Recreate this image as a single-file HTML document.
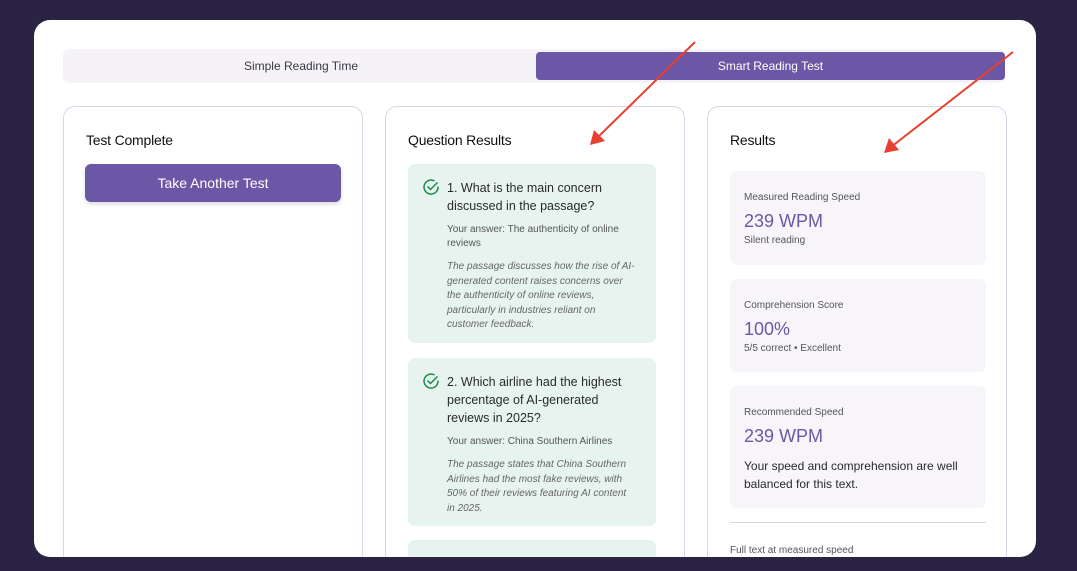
<!DOCTYPE html>
<html><head><style>
*{margin:0;padding:0;box-sizing:border-box}
body{width:1077px;height:571px;background:#2a2343;font-family:"Liberation Sans",sans-serif;position:relative;overflow:hidden;color:#1d1b24}
.panel{position:absolute;left:34px;top:20px;width:1002px;height:537px;background:#fff;border-radius:16px;overflow:hidden}
.abs{position:absolute}
.tabs{left:29px;top:29px;width:942px;height:34px;background:#f5f3f7;border-radius:6px}
.tab{position:absolute;top:3px;height:28px;font-size:12px;color:#3a3842;display:flex;align-items:center;justify-content:center}
.card{position:absolute;top:86px;width:300px;height:460px;border:1px solid #ddd3e6;border-radius:12px;overflow:hidden}
.h{position:absolute;left:22px;top:25px;font-size:14px;color:#111;letter-spacing:-0.2px}
.btn{position:absolute;left:21px;top:57px;width:256px;height:38px;background:#6b57a5;border-radius:6px;color:#fff;font-size:14px;display:flex;align-items:center;justify-content:center;box-shadow:0 2px 4px rgba(0,0,0,.15)}
.q{position:absolute;left:22px;width:248px;background:#e7f3ee;border-radius:7px;padding:15px 16px 0 39px}
.q svg{position:absolute;left:14px;top:14px}
.qt{font-size:12.5px;line-height:18px;color:#2a2a2e}
.ya{font-size:10px;line-height:14px;color:#555;margin-top:8px}
.ex{font-size:10px;line-height:14.5px;color:#666;font-style:italic;margin-top:9px;padding-right:4px}
.r{position:absolute;left:22px;width:256px;background:#f7f5fa;border-radius:7px;padding:21px 14px 0}
.rl{font-size:10px;color:#555}
.rv{font-size:18px;color:#6b57a5;margin-top:8px}
.rs{font-size:10px;color:#555;margin-top:3px}
</style></head><body>
<div class="panel">
 <div class="abs tabs">
  <div class="tab" style="left:3px;width:470px">Simple Reading Time</div>
  <div class="tab" style="left:473px;width:469px;background:#6b57a5;color:#fff;border-radius:4px">Smart Reading Test</div>
 </div>
 <div class="card" style="left:29px"><div class="h">Test Complete</div><div class="btn">Take Another Test</div></div>
 <div class="card" style="left:351px"><div class="h">Question Results</div>
  <div class="q" style="top:57px;height:179px">
   <svg width="18" height="18" viewBox="0 0 18 18"><path d="M16 8.5A7 7 0 1 1 12.5 3" fill="none" stroke="#1f8a4c" stroke-width="1.5"/><path d="M5.5 8.5l3 3 7-7" fill="none" stroke="#1f8a4c" stroke-width="1.5"/></svg>
   <div class="qt">1. What is the main concern discussed in the passage?</div>
   <div class="ya">Your answer: The authenticity of online reviews</div>
   <div class="ex">The passage discusses how the rise of AI-generated content raises concerns over the authenticity of online reviews, particularly in industries reliant on customer feedback.</div>
  </div>
  <div class="q" style="top:251px;height:168px">
   <svg width="18" height="18" viewBox="0 0 18 18"><path d="M16 8.5A7 7 0 1 1 12.5 3" fill="none" stroke="#1f8a4c" stroke-width="1.5"/><path d="M5.5 8.5l3 3 7-7" fill="none" stroke="#1f8a4c" stroke-width="1.5"/></svg>
   <div class="qt">2. Which airline had the highest percentage of AI-generated reviews in 2025?</div>
   <div class="ya">Your answer: China Southern Airlines</div>
   <div class="ex">The passage states that China Southern Airlines had the most fake reviews, with 50% of their reviews featuring AI content in 2025.</div>
  </div>
  <div class="q" style="top:433px;height:60px"></div>
 </div>
 <div class="card" style="left:673px"><div class="h">Results</div>
  <div class="r" style="top:64px;height:94px"><div class="rl">Measured Reading Speed</div><div class="rv">239 WPM</div><div class="rs">Silent reading</div></div>
  <div class="r" style="top:172px;height:93px"><div class="rl">Comprehension Score</div><div class="rv">100%</div><div class="rs">5/5 correct • Excellent</div></div>
  <div class="r" style="top:279px;height:122px"><div class="rl">Recommended Speed</div><div class="rv">239 WPM</div><div style="font-size:12px;line-height:18px;color:#2a2a2e;margin-top:10px">Your speed and comprehension are well balanced for this text.</div></div>
  <div class="abs" style="left:22px;top:415px;width:256px;border-top:1px solid #ddd3e6"></div>
  <div class="abs" style="left:22px;top:438px;font-size:10px;color:#555">Full text at measured speed</div>
 </div>
</div>
<svg class="abs" style="left:0;top:0" width="1077" height="571">
 <g stroke="#e8402f" stroke-width="2" fill="#e8402f">
  <line x1="695" y1="42" x2="597" y2="138"/><polygon points="590,145 594,130 605,141" stroke="none"/>
  <line x1="1013" y1="52" x2="891" y2="147"/><polygon points="884,153 889,138 899,150" stroke="none"/>
 </g>
</svg>
</body></html>
